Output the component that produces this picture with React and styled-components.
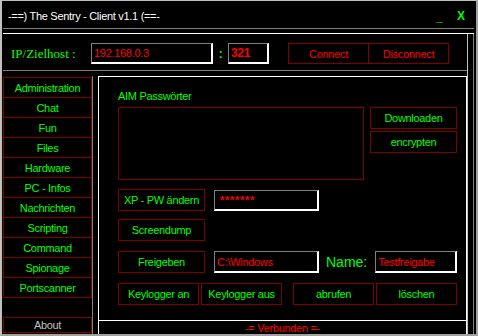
import React from "react";
import styled, { createGlobalStyle } from "styled-components";

const GlobalStyle = createGlobalStyle`
  html, body {
    margin: 0;
    padding: 0;
    background: #000;
  }
  body {
    font-family: "Liberation Sans", Arial, sans-serif;
    font-size: 11px;
    letter-spacing: -0.3px;
  }
  * {
    box-sizing: border-box;
  }
`;

const GREEN = "#00ff00";
const RED = "#ff0000";
const DARK_RED = "#800000";

const menu = [
  "Administration",
  "Chat",
  "Fun",
  "Files",
  "Hardware",
  "PC - Infos",
  "Nachrichten",
  "Scripting",
  "Command",
  "Spionage",
  "Portscanner",
];

const App = () => (
  <>
    <GlobalStyle />
    <Window>
      <TitleBar>
        <TitleText>-==) The Sentry - Client v1.1 (==-</TitleText>
        <TitleControls>
          <Minimize>_</Minimize>
          <Close>X</Close>
        </TitleControls>
      </TitleBar>

      <Frame>
        <Inner>
          <Column>
            <IpPanel>
              <IpLabel>IP/Zielhost :</IpLabel>
              <Field $w={122}>192.168.0.3</Field>
              <Colon>:</Colon>
              <Field $w={41} $bold>
                321
              </Field>
              <ConnectGroup>
                <ConnectButton>Connect</ConnectButton>
                <ConnectButton>Disconnect</ConnectButton>
              </ConnectGroup>
            </IpPanel>

            <Lower>
              <Sidebar>
                {menu.map((item) => (
                  <NavItem key={item}>{item}</NavItem>
                ))}
                <NavItem $about>About</NavItem>
              </Sidebar>

              <Main>
                <Content>
                  <Label>AIM Passwörter</Label>
                  <Row $top={4} $align="flex-start">
                    <TextBox />
                    <ButtonStack>
                      <Button $w={87}>Downloaden</Button>
                      <Button $w={87}>encrypten</Button>
                    </ButtonStack>
                  </Row>

                  <Row $top={9} $align="flex-end">
                    <Button $w={87}>XP - PW ändern</Button>
                    <Field $w={105} $h={21} $gap={9} $stars>
                      *******
                    </Field>
                  </Row>

                  <Row $top={8}>
                    <Button $w={87} $h={22}>
                      Screendump
                    </Button>
                  </Row>

                  <Row $top={10}>
                    <Button $w={87}>Freigeben</Button>
                    <Field $w={105} $h={22} $gap={9}>
                      C:\Windows
                    </Field>
                    <NameLabel>Name:</NameLabel>
                    <Field $w={82} $h={22}>
                      Testfreigabe
                    </Field>
                  </Row>

                  <Row $top={10}>
                    <Button $w={81}>Keylogger an</Button>
                    <Button $w={81} $gap={2}>
                      Keylogger aus
                    </Button>
                    <Button $w={81} $gap={11}>
                      abrufen
                    </Button>
                    <Button $w={81} $gap={2}>
                      löschen
                    </Button>
                  </Row>
                </Content>
                <Status>-= Verbunden =-</Status>
              </Main>
            </Lower>
          </Column>
          <Strip />
        </Inner>
      </Frame>
    </Window>
  </>
);

export default App;

const Window = styled.div`
  width: 478px;
  height: 336px;
  background: #000;
  border-top: 1px solid #c0c0c0;
  border-left: 2px solid #c0c0c0;
  border-right: 2px solid #a0a0a0;
  border-bottom: 2px solid #a0a0a0;
  display: flex;
  flex-direction: column;
  overflow: hidden;
`;

const TitleBar = styled.div`
  height: 27px;
  flex: none;
  display: flex;
  align-items: center;
  padding: 3px 0 0 6px;
  color: #fff;
`;

const TitleText = styled.span`
  font-size: 11px;
`;

const TitleControls = styled.div`
  margin-left: auto;
  margin-right: 11px;
  display: flex;
  align-items: center;
  gap: 14px;
  color: ${GREEN};
  font-weight: bold;
  font-size: 12px;
  letter-spacing: 0;
`;

const Minimize = styled.span`
  position: relative;
  top: 1px;
`;

const Close = styled.span`
  font-size: 12px;
`;

const Frame = styled.div`
  flex: 1;
  display: flex;
  flex-direction: column;
  margin: 0 2px 0 1px;
  padding-top: 4px;
  border-top: 1px solid #808080;
`;

const Inner = styled.div`
  flex: 1;
  display: flex;
  border-top: 1px solid #fff;
`;

const Column = styled.div`
  flex: 1;
  display: flex;
  flex-direction: column;
  border-right: 1px solid #c0c0c0;
`;

const Strip = styled.div`
  width: 6px;
  border-right: 1px solid #808080;
`;

const IpPanel = styled.div`
  height: 37px;
  flex: none;
  display: flex;
  align-items: flex-start;
  padding: 9px 0 0 8px;
  border-bottom: 1px solid #808080;
`;

const IpLabel = styled.div`
  width: 80px;
  height: 21px;
  display: flex;
  align-items: center;
  color: ${GREEN};
  font-family: "Liberation Serif", "Times New Roman", serif;
  font-size: 13px;
  letter-spacing: 0;
`;

const Colon = styled.div`
  width: 15px;
  height: 21px;
  display: flex;
  align-items: center;
  justify-content: center;
  color: ${GREEN};
  font-weight: bold;
  font-size: 12px;
`;

const Field = styled.div`
  width: ${({ $w }) => $w}px;
  height: ${({ $h }) => $h || 21}px;
  margin-left: ${({ $gap }) => $gap || 0}px;
  display: flex;
  align-items: center;
  background: #000;
  border-top: 1px solid #808080;
  border-left: 1px solid #808080;
  border-right: 2px solid #fff;
  border-bottom: 2px solid #fff;
  color: ${RED};
  font-weight: ${({ $bold, $stars }) => ($bold || $stars ? "bold" : "normal")};
  font-size: ${({ $bold }) => ($bold ? 12 : 11)}px;
  letter-spacing: ${({ $stars }) => ($stars ? "0.7px" : "-0.3px")};
  padding-left: ${({ $stars }) => ($stars ? 5 : 2)}px;
`;

const ConnectGroup = styled.div`
  display: flex;
  margin-left: 19px;
`;

const ConnectButton = styled.div`
  width: 81px;
  height: 21px;
  display: flex;
  align-items: center;
  justify-content: center;
  border: 1px solid ${DARK_RED};
  color: ${RED};
  font-size: 11px;

  & + & {
    margin-left: -1px;
  }
`;

const Lower = styled.div`
  flex: 1;
  display: flex;
  margin-top: 5px;
`;

const Sidebar = styled.nav`
  width: 90px;
  flex: none;
  display: flex;
  flex-direction: column;
  padding: 1px 0 1px;
  border-right: 1px solid #808080;
`;

const NavItem = styled.div`
  width: 89px;
  height: ${({ $about }) => ($about ? 16 : 21)}px;
  margin-top: ${({ $about }) => ($about ? "auto" : "-1px")};
  display: flex;
  align-items: center;
  justify-content: center;
  border: 1px solid ${DARK_RED};
  color: ${({ $about }) => ($about ? "#c0c0c0" : GREEN)};
  font-size: 11px;

  &:first-child {
    margin-top: 0;
  }
`;

const Main = styled.div`
  flex: 1;
  margin-left: 5px;
  display: flex;
  flex-direction: column;
  border-top: 1px solid #fff;
  border-left: 1px solid #fff;
  border-right: 1px solid #fff;
`;

const Content = styled.div`
  flex: 1;
  display: flex;
  flex-direction: column;
  padding: 13px 0 0 19px;
  border-bottom: 1px solid #fff;
`;

const Label = styled.div`
  height: 13px;
  line-height: 13px;
  color: ${GREEN};
  font-size: 11px;
`;

const Row = styled.div`
  display: flex;
  align-items: ${({ $align }) => $align || "center"};
  margin-top: ${({ $top }) => $top}px;
`;

const TextBox = styled.div`
  width: 246px;
  height: 73px;
  border: 1px solid ${DARK_RED};
`;

const ButtonStack = styled.div`
  display: flex;
  flex-direction: column;
  gap: 2px;
  margin-left: 6px;
`;

const Button = styled.div`
  width: ${({ $w }) => $w}px;
  height: ${({ $h }) => $h || 22}px;
  margin-left: ${({ $gap }) => $gap || 0}px;
  display: flex;
  align-items: center;
  justify-content: center;
  border: 1px solid ${DARK_RED};
  color: ${GREEN};
  font-size: 11px;
  white-space: nowrap;
`;

const NameLabel = styled.div`
  margin: 0 8px 0 7px;
  color: ${GREEN};
  font-size: 14px;
  letter-spacing: 0;
`;

const Status = styled.div`
  height: 13px;
  display: flex;
  align-items: center;
  justify-content: center;
  color: ${RED};
  font-size: 11px;
`;
